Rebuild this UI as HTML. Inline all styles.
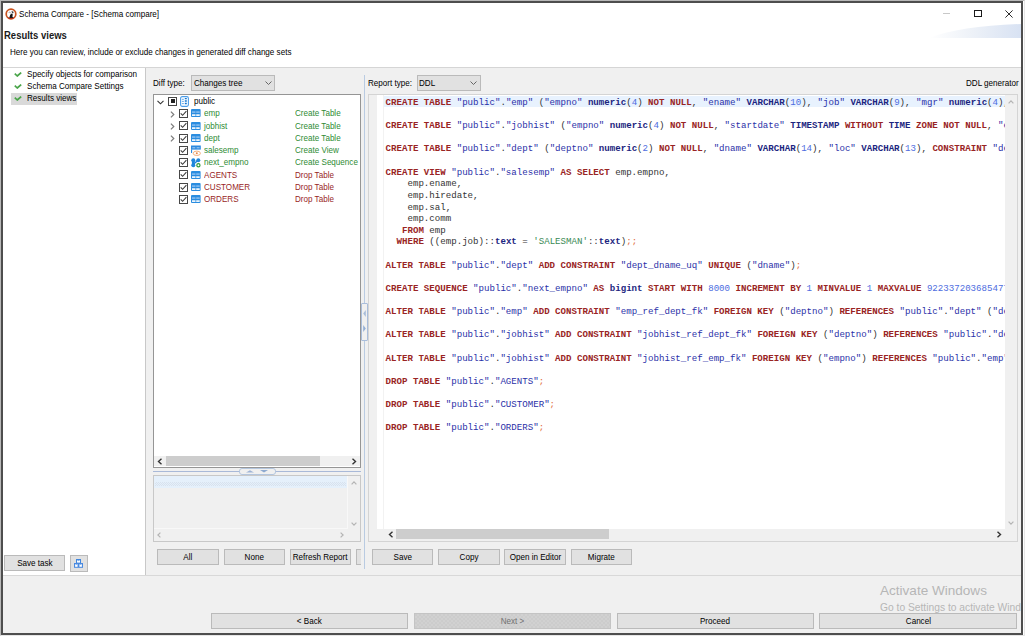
<!DOCTYPE html>
<html><head><meta charset="utf-8">
<style>
*{margin:0;padding:0;box-sizing:border-box}
html,body{width:1026px;height:638px;overflow:hidden;background:#fff}
body{position:relative;font-family:"Liberation Sans",sans-serif;font-size:8.1px;color:#000}
.a{position:absolute}
.t{position:absolute;white-space:pre;line-height:10px;font-size:8.6px;transform:scaleX(0.94);transform-origin:0 0}
.btn{position:absolute;background:#e1e1e1;border:1px solid #bababa;text-align:center;font-size:8.6px;line-height:14px;color:#000;white-space:nowrap}
.btn span{display:inline-block;transform:scaleX(0.94)}
.combo{position:absolute;background:#e1e1e1;border:1px solid #bababa}
.cb{position:absolute;width:9px;height:9px;border:1px solid #474747;background:#fff}
.code{position:absolute;font-family:"Liberation Mono",monospace;font-size:9.12px;line-height:11.62px;white-space:pre;color:#333}
.k{color:#992424;font-weight:bold}
.s{color:#2a30a8}
.ty{color:#1c2580;font-weight:bold}
.n{color:#4d6ce0}
.g{color:#3a8a55}
.d{color:#e06a3a}
.gr{color:#2e8b34}
.rd{color:#981f1f}
</style></head>
<body>
<!-- window frame -->
<div class="a" style="left:0px;top:0px;width:1025px;height:636px;border:1px solid #b9b9b9;border-right-color:#e6e6e6;border-bottom-color:#e6e6e6"></div>
<div class="a" style="left:1px;top:1px;width:1022px;height:634px;border:2px solid #4e4e4e;"></div>

<!-- title -->
<svg class="a" style="left:4.5px;top:7.7px" width="12" height="12" viewBox="0 0 12 12">
  <circle cx="6" cy="6" r="4.8" fill="#fff" stroke="#c9531f" stroke-width="1.7"/>
  <path d="M2.6 9 Q6 11.4 9.4 9 L8.6 10.2 Q6 11.2 3.4 10.2Z" fill="#b41c16"/>
  <path d="M3.6 4.2 L4.6 3.6 L4.2 5.2Z" fill="#555"/>
  <path d="M6.5 3 L8.3 3.6 L8.6 5 L7.2 5.4Z" fill="#444"/>
  <path d="M4.2 10 L5.2 6.8 L6.6 5.6 L7.8 6.6 L7.4 8.4 L8.2 10Z" fill="#161616"/>
  <path d="M5 4.5 L6 3.8 L5.6 6 Z" fill="#aaa"/>
</svg>
<div class="t" style="left:19px;top:8.7px">Schema Compare - [Schema compare]</div>
<div class="a" style="left:943px;top:13px;width:7px;height:1px;background:#c8c8c8"></div>
<div class="a" style="left:974px;top:10px;width:7.5px;height:7px;border:1px solid #1a1a1a"></div>
<svg class="a" style="left:1005px;top:9.5px" width="8" height="8" viewBox="0 0 8 8"><path d="M0.4 0.4L7.6 7.6M7.6 0.4L0.4 7.6" stroke="#222" stroke-width="0.95"/></svg>

<!-- header banner -->
<svg class="a" style="left:921px;top:22px" width="100" height="16" viewBox="0 0 100 16">
  <defs><linearGradient id="bg" x1="0" x2="1" y1="0" y2="0">
    <stop offset="0" stop-color="#ffffff"/>
    <stop offset="0.45" stop-color="#eef2f8"/>
    <stop offset="1" stop-color="#d8e2f3"/></linearGradient></defs>
  <path d="M8 16 Q40 4 100 2 L100 16 Z" fill="url(#bg)"/>
</svg>
<div class="t" style="left:4px;top:29.5px;font-weight:bold;font-size:10px;line-height:12px;color:#1a1a1a;transform:scaleX(0.95)">Results views</div>
<div class="t" style="left:9.6px;top:46.5px">Here you can review, include or exclude changes in generated diff change sets</div>
<div class="a" style="left:3px;top:67px;width:1018px;height:1px;background:#d5d5d5"></div>

<!-- body background -->
<div class="a" style="left:3px;top:68px;width:1018px;height:565px;background:#f0f0f0"></div>
<!-- left nav (white) -->
<div class="a" style="left:3px;top:68px;width:142px;height:507px;background:#fff"></div>
<div class="a" style="left:145px;top:68px;width:1px;height:507px;background:#c8c8c8"></div>
<div class="a" style="left:11px;top:93px;width:66px;height:12px;background:#d9d9d9"></div>
<svg class="a" style="left:14px;top:72px" width="8" height="5" viewBox="0 0 8 5"><path d="M0.8 1.6 L3.2 4 L7.2 0.6" stroke="#4aa54a" stroke-width="1.7" fill="none" stroke-linejoin="round"/></svg>
<svg class="a" style="left:14px;top:84px" width="8" height="5" viewBox="0 0 8 5"><path d="M0.8 1.6 L3.2 4 L7.2 0.6" stroke="#4aa54a" stroke-width="1.7" fill="none" stroke-linejoin="round"/></svg>
<svg class="a" style="left:14px;top:96px" width="8" height="5" viewBox="0 0 8 5"><path d="M0.8 1.6 L3.2 4 L7.2 0.6" stroke="#4aa54a" stroke-width="1.7" fill="none" stroke-linejoin="round"/></svg>
<div class="t" style="left:27px;top:69px">Specify objects for comparison</div>
<div class="t" style="left:27px;top:81px">Schema Compare Settings</div>
<div class="t" style="left:27px;top:93px">Results views</div>

<div class="btn" style="left:4px;top:555px;width:61px;height:16px"><span>Save task</span></div>
<div class="btn" style="left:70px;top:555px;width:18px;height:17px"></div>
<svg class="a" style="left:74px;top:559px" width="9" height="9" viewBox="0 0 9 9">
 <rect x="2" y="0" width="5" height="4.4" fill="#3f86de"/><rect x="3" y="1.4" width="3" height="2.2" fill="#fff"/><path d="M3.8 1.4 L4.5 2.3 L5.2 1.4Z" fill="#3f86de"/>
 <rect x="0" y="4" width="9" height="4.8" fill="#4a8ae0"/><rect x="1.1" y="5.3" width="2.5" height="2.5" fill="#fff"/><rect x="5.4" y="5.3" width="2.5" height="2.5" fill="#fff"/>
 <path d="M1.8 5.3 L2.35 6 L2.9 5.3Z M6.1 5.3 L6.65 6 L7.2 5.3Z" fill="#4a8ae0"/>
</svg>

<!-- separator lines bottom -->
<div class="a" style="left:3px;top:575px;width:1018px;height:1px;background:#d8d8d8"></div>

<!-- middle: diff type -->
<div class="t" style="left:153px;top:78px">Diff type:</div>
<div class="combo" style="left:191px;top:75px;width:84px;height:16px"></div>
<div class="t" style="left:194px;top:78px">Changes tree</div>
<svg class="a" style="left:265px;top:81px" width="7" height="4" viewBox="0 0 7 4"><path d="M0.5 0.5 L3.5 3.5 L6.5 0.5" stroke="#666" fill="none"/></svg>

<!-- tree -->
<div class="a" style="left:153px;top:94px;width:208px;height:374px;border:1px solid #959595;background:#fff"></div>
<div id="tree"><svg class="a" style="left:157px;top:99.50px" width="7" height="5" viewBox="0 0 7 5"><path d="M0.5 0.8 L3.5 3.8 L6.5 0.8" stroke="#333" stroke-width="1.1" fill="none"/></svg>
<div class="cb" style="left:168px;top:96.80px"></div>
<div class="a" style="left:171px;top:99.30px;width:4px;height:4px;background:#222"></div>
<svg class="a" style="left:180px;top:96.30px" width="9" height="11" viewBox="0 0 9 11"><rect x="0.6" y="0.6" width="7.8" height="9.8" rx="1.6" fill="#fff" stroke="#4c9de8" stroke-width="1.1"/><path d="M1.9 3.3h2M1.9 5.4h2M1.9 7.6h2" stroke="#5aa2e6" stroke-width="0.9"/><path d="M4.8 2.6h2M4.8 5h2M4.8 7.5h2" stroke="#1577d2" stroke-width="1.4"/></svg>
<div class="t" style="left:194px;top:95.50px">public</div>
<svg class="a" style="left:170px;top:110.55px" width="5" height="7" viewBox="0 0 5 7"><path d="M0.9 0.6 L3.8 3.5 L0.9 6.4" stroke="#7c7c7c" stroke-width="1.2" fill="none"/></svg>
<div class="cb" style="left:179px;top:109.05px"></div>
<svg class="a" style="left:180px;top:110.05px" width="7" height="7" viewBox="0 0 7 7"><path d="M0.7 3.4 L2.6 5.3 L6.4 1.2" stroke="#3a3a3a" stroke-width="1.05" fill="none"/></svg>
<svg class="a" style="left:191px;top:109.45px" width="10" height="8" viewBox="0 0 10 8"><rect x="0" y="0" width="9.6" height="8" rx="1" fill="#2a8de0"/><rect x="1" y="2.3" width="3.5" height="1.6" fill="#86bcef"/><rect x="5.2" y="2.3" width="3.5" height="1.6" fill="#86bcef"/><rect x="1" y="5.3" width="3.5" height="1.6" fill="#fff"/><rect x="5.2" y="5.3" width="3.5" height="1.6" fill="#fff"/></svg>
<div class="t gr" style="left:204px;top:108.35px">emp</div>
<div class="t gr" style="left:295px;top:108.35px">Create Table</div>
<svg class="a" style="left:170px;top:122.80px" width="5" height="7" viewBox="0 0 5 7"><path d="M0.9 0.6 L3.8 3.5 L0.9 6.4" stroke="#7c7c7c" stroke-width="1.2" fill="none"/></svg>
<div class="cb" style="left:179px;top:121.30px"></div>
<svg class="a" style="left:180px;top:122.30px" width="7" height="7" viewBox="0 0 7 7"><path d="M0.7 3.4 L2.6 5.3 L6.4 1.2" stroke="#3a3a3a" stroke-width="1.05" fill="none"/></svg>
<svg class="a" style="left:191px;top:121.70px" width="10" height="8" viewBox="0 0 10 8"><rect x="0" y="0" width="9.6" height="8" rx="1" fill="#2a8de0"/><rect x="1" y="2.3" width="3.5" height="1.6" fill="#86bcef"/><rect x="5.2" y="2.3" width="3.5" height="1.6" fill="#86bcef"/><rect x="1" y="5.3" width="3.5" height="1.6" fill="#fff"/><rect x="5.2" y="5.3" width="3.5" height="1.6" fill="#fff"/></svg>
<div class="t gr" style="left:204px;top:120.60px">jobhist</div>
<div class="t gr" style="left:295px;top:120.60px">Create Table</div>
<svg class="a" style="left:170px;top:135.05px" width="5" height="7" viewBox="0 0 5 7"><path d="M0.9 0.6 L3.8 3.5 L0.9 6.4" stroke="#7c7c7c" stroke-width="1.2" fill="none"/></svg>
<div class="cb" style="left:179px;top:133.55px"></div>
<svg class="a" style="left:180px;top:134.55px" width="7" height="7" viewBox="0 0 7 7"><path d="M0.7 3.4 L2.6 5.3 L6.4 1.2" stroke="#3a3a3a" stroke-width="1.05" fill="none"/></svg>
<svg class="a" style="left:191px;top:133.95px" width="10" height="8" viewBox="0 0 10 8"><rect x="0" y="0" width="9.6" height="8" rx="1" fill="#2a8de0"/><rect x="1" y="2.3" width="3.5" height="1.6" fill="#86bcef"/><rect x="5.2" y="2.3" width="3.5" height="1.6" fill="#86bcef"/><rect x="1" y="5.3" width="3.5" height="1.6" fill="#fff"/><rect x="5.2" y="5.3" width="3.5" height="1.6" fill="#fff"/></svg>
<div class="t gr" style="left:204px;top:132.85px">dept</div>
<div class="t gr" style="left:295px;top:132.85px">Create Table</div>
<div class="cb" style="left:179px;top:145.80px"></div>
<svg class="a" style="left:180px;top:146.80px" width="7" height="7" viewBox="0 0 7 7"><path d="M0.7 3.4 L2.6 5.3 L6.4 1.2" stroke="#3a3a3a" stroke-width="1.05" fill="none"/></svg>
<svg class="a" style="left:191px;top:145.80px" width="11" height="11" viewBox="0 0 11 11" overflow="visible"><rect x="0" y="-0.5" width="9.8" height="4.1" fill="#2b8ae0"/><path d="M1.3 1.8h3M5.6 1.8h3" stroke="#bcd8f4" stroke-width="0.9"/><rect x="0" y="3.4" width="1.1" height="3.6" fill="#2b8ae0"/><ellipse cx="5.8" cy="7.3" rx="3.6" ry="2.2" fill="#fff" stroke="#f2b07e" stroke-width="1"/><circle cx="5.8" cy="7.3" r="1" fill="#e8864a"/></svg>
<div class="t gr" style="left:204px;top:145.10px">salesemp</div>
<div class="t gr" style="left:295px;top:145.10px">Create View</div>
<div class="cb" style="left:179px;top:158.05px"></div>
<svg class="a" style="left:180px;top:159.05px" width="7" height="7" viewBox="0 0 7 7"><path d="M0.7 3.4 L2.6 5.3 L6.4 1.2" stroke="#3a3a3a" stroke-width="1.05" fill="none"/></svg>
<svg class="a" style="left:191px;top:158.05px" width="10" height="10" viewBox="0 0 10 10"><path d="M2.3 2.2 L2.3 7.2" stroke="#1f86dc" stroke-width="2.8"/><circle cx="2.3" cy="2.2" r="2" fill="#1f86dc"/><circle cx="7.3" cy="2.2" r="2" fill="#1f86dc"/><circle cx="2.3" cy="7.2" r="2" fill="#1f86dc"/><path d="M7.3 2.2 L2.6 6" stroke="#1f86dc" stroke-width="1.5"/><circle cx="7.4" cy="7.3" r="1.6" fill="#fff" stroke="#2f9a3a" stroke-width="1.2"/></svg>
<div class="t gr" style="left:204px;top:157.35px">next_empno</div>
<div class="t gr" style="left:295px;top:157.35px">Create Sequence</div>
<div class="cb" style="left:179px;top:170.30px"></div>
<svg class="a" style="left:180px;top:171.30px" width="7" height="7" viewBox="0 0 7 7"><path d="M0.7 3.4 L2.6 5.3 L6.4 1.2" stroke="#3a3a3a" stroke-width="1.05" fill="none"/></svg>
<svg class="a" style="left:191px;top:170.70px" width="10" height="8" viewBox="0 0 10 8"><rect x="0" y="0" width="9.6" height="8" rx="1" fill="#2a8de0"/><rect x="1" y="2.3" width="3.5" height="1.6" fill="#86bcef"/><rect x="5.2" y="2.3" width="3.5" height="1.6" fill="#86bcef"/><rect x="1" y="5.3" width="3.5" height="1.6" fill="#fff"/><rect x="5.2" y="5.3" width="3.5" height="1.6" fill="#fff"/></svg>
<div class="t rd" style="left:204px;top:169.60px">AGENTS</div>
<div class="t rd" style="left:295px;top:169.60px">Drop Table</div>
<div class="cb" style="left:179px;top:182.55px"></div>
<svg class="a" style="left:180px;top:183.55px" width="7" height="7" viewBox="0 0 7 7"><path d="M0.7 3.4 L2.6 5.3 L6.4 1.2" stroke="#3a3a3a" stroke-width="1.05" fill="none"/></svg>
<svg class="a" style="left:191px;top:182.95px" width="10" height="8" viewBox="0 0 10 8"><rect x="0" y="0" width="9.6" height="8" rx="1" fill="#2a8de0"/><rect x="1" y="2.3" width="3.5" height="1.6" fill="#86bcef"/><rect x="5.2" y="2.3" width="3.5" height="1.6" fill="#86bcef"/><rect x="1" y="5.3" width="3.5" height="1.6" fill="#fff"/><rect x="5.2" y="5.3" width="3.5" height="1.6" fill="#fff"/></svg>
<div class="t rd" style="left:204px;top:181.85px">CUSTOMER</div>
<div class="t rd" style="left:295px;top:181.85px">Drop Table</div>
<div class="cb" style="left:179px;top:194.80px"></div>
<svg class="a" style="left:180px;top:195.80px" width="7" height="7" viewBox="0 0 7 7"><path d="M0.7 3.4 L2.6 5.3 L6.4 1.2" stroke="#3a3a3a" stroke-width="1.05" fill="none"/></svg>
<svg class="a" style="left:191px;top:195.20px" width="10" height="8" viewBox="0 0 10 8"><rect x="0" y="0" width="9.6" height="8" rx="1" fill="#2a8de0"/><rect x="1" y="2.3" width="3.5" height="1.6" fill="#86bcef"/><rect x="5.2" y="2.3" width="3.5" height="1.6" fill="#86bcef"/><rect x="1" y="5.3" width="3.5" height="1.6" fill="#fff"/><rect x="5.2" y="5.3" width="3.5" height="1.6" fill="#fff"/></svg>
<div class="t rd" style="left:204px;top:194.10px">ORDERS</div>
<div class="t rd" style="left:295px;top:194.10px">Drop Table</div></div><!--/tree-->

<!-- h scroll tree -->
<div class="a" style="left:154px;top:456px;width:206px;height:10px;background:#f0f0f0"></div>
<div class="a" style="left:166px;top:456px;width:154px;height:10px;background:#cdcdcd"></div>
<svg class="a" style="left:157px;top:458px" width="6" height="7" viewBox="0 0 6 7"><path d="M4.5 0.8 L1.5 3.5 L4.5 6.2" stroke="#333" stroke-width="1.4" fill="none"/></svg>
<svg class="a" style="left:351px;top:458px" width="6" height="7" viewBox="0 0 6 7"><path d="M1.5 0.8 L4.5 3.5 L1.5 6.2" stroke="#333" stroke-width="1.4" fill="none"/></svg>

<!-- sash -->
<div class="a" style="left:153px;top:471px;width:208px;height:1px;background:#a9b9d8"></div>
<div class="a" style="left:239px;top:468px;width:37px;height:7px;border:1px solid #b4c6de;border-radius:3px;background:#f0f0f0"></div>
<svg class="a" style="left:245px;top:469px" width="24" height="4" viewBox="0 0 24 4"><path d="M1 3.6 L5 1.2 L9 3.6 Z" fill="#9db3d6"/><path d="M15 1 L23 1 L19 3.4 Z" fill="#8eaad0"/></svg>

<!-- lower box -->
<div class="a" style="left:153px;top:475px;width:208px;height:67px;border:1px solid #c8c8c8;background:#f0f0f0"></div>
<div class="a" style="left:154px;top:476px;width:193px;height:12px;background:#e5f0fb"></div>
<div class="a" style="left:155px;top:482px;width:191px;height:4px;background:conic-gradient(#d3dde9 25%,transparent 0 50%,#d3dde9 0 75%,transparent 0) 0 0/2px 2px;opacity:.75"></div>
<div class="a" style="left:347px;top:476px;width:1px;height:52px;background:#f8f8f8"></div>
<div class="a" style="left:154px;top:528px;width:194px;height:1px;background:#f8f8f8"></div>
<svg class="a" style="left:350.5px;top:480.5px" width="6" height="4" viewBox="0 0 6 4"><path d="M0.6 3.4 L3 0.9 L5.4 3.4" stroke="#b4b4b4" stroke-width="1.2" fill="none"/></svg>
<svg class="a" style="left:350.5px;top:521.5px" width="6" height="4" viewBox="0 0 6 4"><path d="M0.6 0.6 L3 3.1 L5.4 0.6" stroke="#b4b4b4" stroke-width="1.2" fill="none"/></svg>
<svg class="a" style="left:340px;top:531.5px" width="4" height="6" viewBox="0 0 4 6"><path d="M0.6 0.6 L3.1 3 L0.6 5.4" stroke="#b4b4b4" stroke-width="1.2" fill="none"/></svg>
<svg class="a" style="left:157px;top:531.5px" width="4" height="6" viewBox="0 0 4 6"><path d="M3.4 0.6 L0.9 3 L3.4 5.4" stroke="#b4b4b4" stroke-width="1.2" fill="none"/></svg>

<div class="btn" style="left:157px;top:549px;width:62px;height:16px"><span>All</span></div>
<div class="btn" style="left:224px;top:549px;width:61px;height:16px"><span>None</span></div>
<div class="btn" style="left:290px;top:549px;width:61px;height:16px"><span>Refresh Report</span></div>
<div class="btn" style="left:356px;top:549px;width:5px;height:16px;border-right:none"></div>

<!-- vertical sash -->
<div class="a" style="left:364px;top:75px;width:1px;height:494px;background:#b9cbe2"></div>
<div class="a" style="left:361px;top:303px;width:7px;height:38px;border:1px solid #a9bddb;border-radius:1px;background:#f0f0f0"></div>
<svg class="a" style="left:362px;top:308px" width="5" height="28" viewBox="0 0 5 28"><path d="M3.8 2 L1.2 5.5 L3.8 9 Z" fill="#a8bcd8"/><path d="M1.2 17 L3.8 20.5 L1.2 24 Z" fill="#93aed4"/></svg>

<!-- report type -->
<div class="t" style="left:368px;top:78px">Report type:</div>
<div class="combo" style="left:417px;top:75px;width:64px;height:16px"></div>
<div class="t" style="left:419px;top:78px">DDL</div>
<svg class="a" style="left:470px;top:81px" width="7" height="4" viewBox="0 0 7 4"><path d="M0.5 0.5 L3.5 3.5 L6.5 0.5" stroke="#666" fill="none"/></svg>
<div class="t" style="left:966px;top:78px">DDL generator</div>

<!-- editor -->
<div class="a" style="left:368px;top:94px;width:650px;height:448px;border:1px solid #d4d4d4;background:#fff"></div>
<div class="a" style="left:369px;top:95px;width:8px;height:446px;background:#f0f0f0"></div>
<div class="a" style="left:383px;top:95px;width:1px;height:434px;background:#f2f2f2"></div>
<div class="a" style="left:384px;top:96px;width:621px;height:11px;background:#e8f2fe"></div>
<div class="a" style="left:384px;top:95px;width:621px;height:434px;overflow:hidden">
<div class="code" style="left:1.6px;top:1.9px" id="code"><span class="k">CREATE TABLE</span> <span class="s">"public"</span>.<span class="s">"emp"</span> (<span class="s">"empno"</span> <span class="ty">numeric</span>(<span class="n">4</span>) <span class="k">NOT NULL</span>, <span class="s">"ename"</span> <span class="ty">VARCHAR</span>(<span class="n">10</span>), <span class="s">"job"</span> <span class="ty">VARCHAR</span>(<span class="n">9</span>), <span class="s">"mgr"</span> <span class="ty">numeric</span>(<span class="n">4</span>), <span class="s">"hiredate"</span> <span class="ty">TIMESTAMP</span>

<span class="k">CREATE TABLE</span> <span class="s">"public"</span>.<span class="s">"jobhist"</span> (<span class="s">"empno"</span> <span class="ty">numeric</span>(<span class="n">4</span>) <span class="k">NOT NULL</span>, <span class="s">"startdate"</span> <span class="ty">TIMESTAMP</span> <span class="k">WITHOUT</span> <span class="ty">TIME</span> <span class="k">ZONE NOT NULL</span>, <span class="s">"enddate"</span>

<span class="k">CREATE TABLE</span> <span class="s">"public"</span>.<span class="s">"dept"</span> (<span class="s">"deptno"</span> <span class="ty">numeric</span>(<span class="n">2</span>) <span class="k">NOT NULL</span>, <span class="s">"dname"</span> <span class="ty">VARCHAR</span>(<span class="n">14</span>), <span class="s">"loc"</span> <span class="ty">VARCHAR</span>(<span class="n">13</span>), <span class="k">CONSTRAINT</span> <span class="s">"dept_pk"</span>

<span class="k">CREATE VIEW</span> <span class="s">"public"</span>.<span class="s">"salesemp"</span> <span class="k">AS SELECT</span> emp.empno,
    emp.ename,
    emp.hiredate,
    emp.sal,
    emp.comm
   <span class="k">FROM</span> emp
  <span class="k">WHERE</span> ((emp.job)::<span class="ty">text</span> = <span class="g">'SALESMAN'</span>::<span class="ty">text</span>)<span class="d">;;</span>

<span class="k">ALTER TABLE</span> <span class="s">"public"</span>.<span class="s">"dept"</span> <span class="k">ADD CONSTRAINT</span> <span class="s">"dept_dname_uq"</span> <span class="k">UNIQUE</span> (<span class="s">"dname"</span>)<span class="d">;</span>

<span class="k">CREATE SEQUENCE</span> <span class="s">"public"</span>.<span class="s">"next_empno"</span> <span class="k">AS</span> <span class="ty">bigint</span> <span class="k">START WITH</span> <span class="n">8000</span> <span class="k">INCREMENT BY</span> <span class="n">1</span> <span class="k">MINVALUE</span> <span class="n">1</span> <span class="k">MAXVALUE</span> <span class="n">9223372036854775807</span>

<span class="k">ALTER TABLE</span> <span class="s">"public"</span>.<span class="s">"emp"</span> <span class="k">ADD CONSTRAINT</span> <span class="s">"emp_ref_dept_fk"</span> <span class="k">FOREIGN KEY</span> (<span class="s">"deptno"</span>) <span class="k">REFERENCES</span> <span class="s">"public"</span>.<span class="s">"dept"</span> (<span class="s">"deptno"</span>)

<span class="k">ALTER TABLE</span> <span class="s">"public"</span>.<span class="s">"jobhist"</span> <span class="k">ADD CONSTRAINT</span> <span class="s">"jobhist_ref_dept_fk"</span> <span class="k">FOREIGN KEY</span> (<span class="s">"deptno"</span>) <span class="k">REFERENCES</span> <span class="s">"public"</span>.<span class="s">"dept"</span>

<span class="k">ALTER TABLE</span> <span class="s">"public"</span>.<span class="s">"jobhist"</span> <span class="k">ADD CONSTRAINT</span> <span class="s">"jobhist_ref_emp_fk"</span> <span class="k">FOREIGN KEY</span> (<span class="s">"empno"</span>) <span class="k">REFERENCES</span> <span class="s">"public"</span>.<span class="s">"emp"</span>

<span class="k">DROP TABLE</span> <span class="s">"public"</span>.<span class="s">"AGENTS"</span><span class="d">;</span>

<span class="k">DROP TABLE</span> <span class="s">"public"</span>.<span class="s">"CUSTOMER"</span><span class="d">;</span>

<span class="k">DROP TABLE</span> <span class="s">"public"</span>.<span class="s">"ORDERS"</span><span class="d">;</span></div>
</div>
<div class="a" style="left:1005px;top:95px;width:12px;height:434px;background:#f0f0f0"></div>
<div class="a" style="left:369px;top:529px;width:648px;height:12px;background:#f0f0f0"></div>
<div class="a" style="left:396px;top:529px;width:213px;height:10px;background:#cdcdcd"></div>
<svg class="a" style="left:388px;top:531px" width="6" height="7" viewBox="0 0 6 7"><path d="M4.5 0.8 L1.5 3.5 L4.5 6.2" stroke="#333" stroke-width="1.4" fill="none"/></svg>
<svg class="a" style="left:996px;top:531px" width="6" height="7" viewBox="0 0 6 7"><path d="M1.5 0.8 L4.5 3.5 L1.5 6.2" stroke="#333" stroke-width="1.4" fill="none"/></svg>
<svg class="a" style="left:1008px;top:99.5px" width="6" height="4" viewBox="0 0 6 4"><path d="M0.6 3.4 L3 0.9 L5.4 3.4" stroke="#b4b4b4" stroke-width="1.2" fill="none"/></svg>
<svg class="a" style="left:1008px;top:520.5px" width="6" height="4" viewBox="0 0 6 4"><path d="M0.6 0.6 L3 3.1 L5.4 0.6" stroke="#b4b4b4" stroke-width="1.2" fill="none"/></svg>

<div class="btn" style="left:372px;top:549px;width:61px;height:16px"><span>Save</span></div>
<div class="btn" style="left:438px;top:549px;width:62px;height:16px"><span>Copy</span></div>
<div class="btn" style="left:504px;top:549px;width:62px;height:16px"><span>Open in Editor</span></div>
<div class="btn" style="left:571px;top:549px;width:61px;height:16px"><span>Migrate</span></div>

<!-- bottom buttons -->
<div class="btn" style="left:211px;top:613px;width:197px;height:16px"><span>&lt; Back</span></div>
<div class="btn" style="left:414px;top:613px;width:197px;height:16px;background:#cccccc;border-color:#c4c4c4;color:#707070"><div class="a" style="left:0;top:0;right:0;bottom:0;background:conic-gradient(#d6d6d6 25%,transparent 0 50%,#d6d6d6 0 75%,transparent 0) 0 0/4px 4px;opacity:.5"></div><span style="position:relative">Next &gt;</span></div>
<div class="btn" style="left:617px;top:613px;width:197px;height:16px"><span>Proceed</span></div>
<div class="btn" style="left:819px;top:613px;width:198px;height:16px"><span>Cancel</span></div>

<div class="a" style="left:870px;top:578px;width:151px;height:37px;overflow:hidden">
<div class="t" style="left:10px;top:5.3px;font-size:13.55px;line-height:16px;color:#b6b6b6;transform:none">Activate Windows</div>
<div class="t" style="left:10px;top:23.5px;font-size:10.27px;line-height:12px;color:#b6b6b6;transform:none">Go to Settings to activate Windows.</div>
</div>
</body></html>
